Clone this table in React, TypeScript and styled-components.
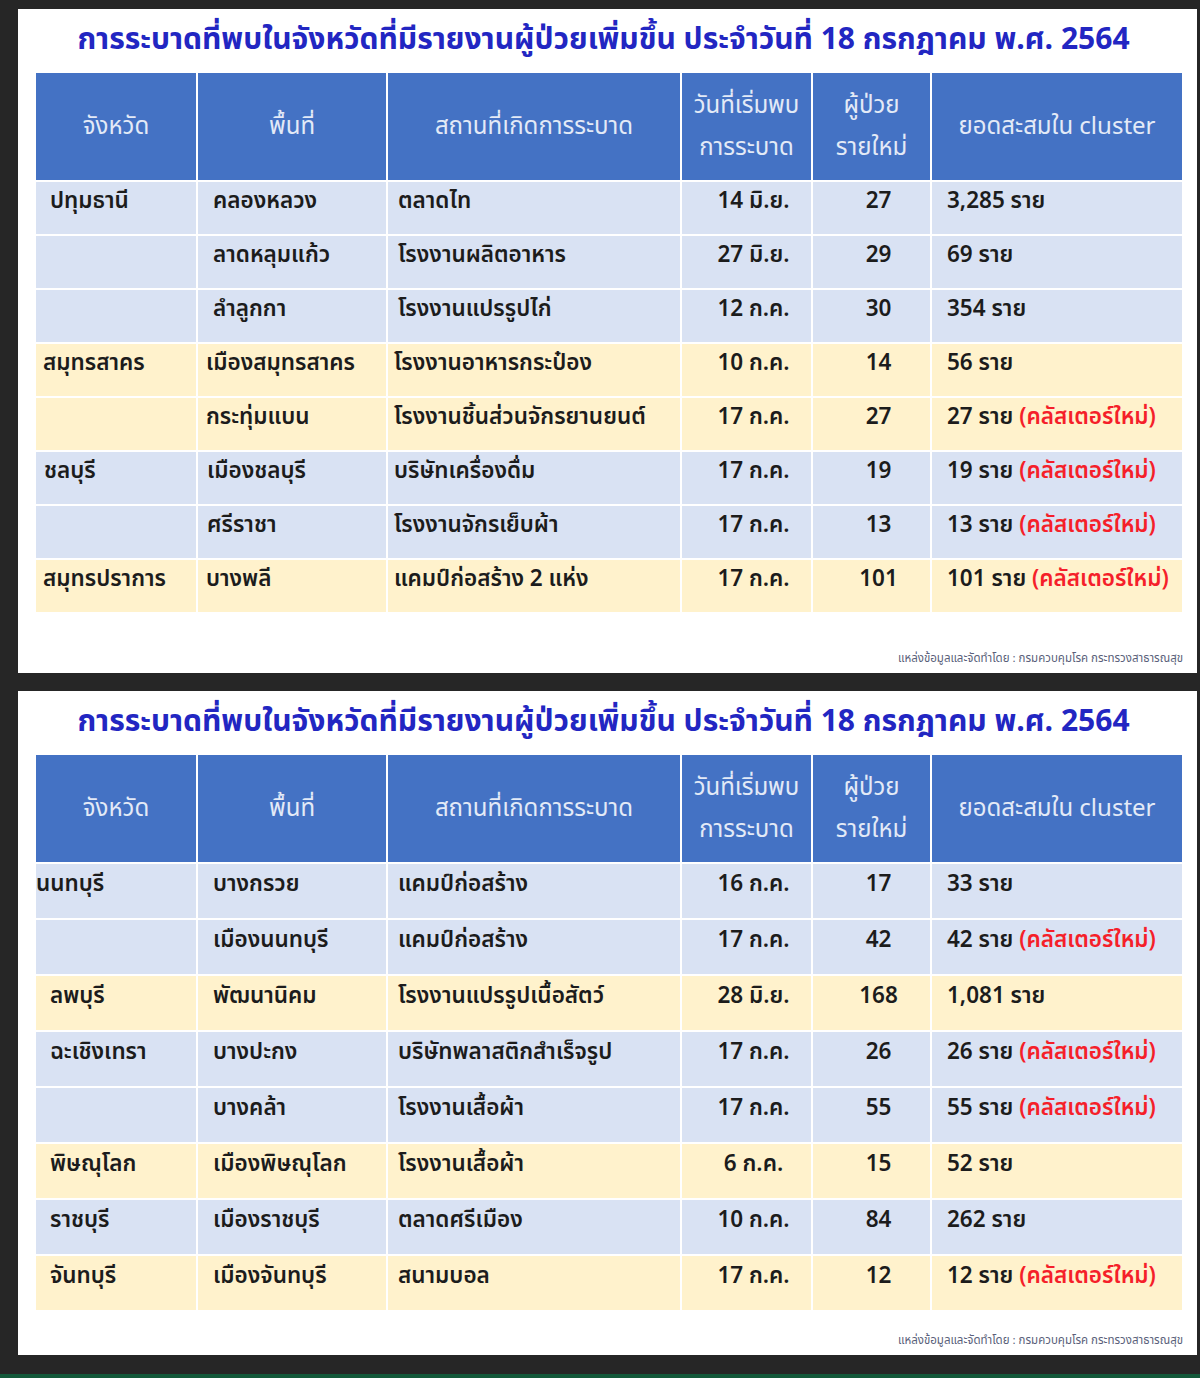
import React from 'react';
import styled, { createGlobalStyle } from 'styled-components';

const GlobalStyle = createGlobalStyle`
  html, body {
    margin: 0;
    padding: 0;
    background: #262626;
  }
`;

type Row = {
  province?: string;
  area: string;
  place: string;
  date: string;
  cases: string;
  total: string;
  isNew?: boolean;
  tone: 'blue' | 'yellow';
  lead?: number;
};

const firstRows: Row[] = [
  { province: 'ปทุมธานี', area: 'คลองหลวง', place: 'ตลาดไท', date: '14 มิ.ย.', cases: '27', total: '3,285 ราย', tone: 'blue' },
  { area: 'ลาดหลุมแก้ว', place: 'โรงงานผลิตอาหาร', date: '27 มิ.ย.', cases: '29', total: '69 ราย', tone: 'blue' },
  { area: 'ลำลูกกา', place: 'โรงงานแปรรูปไก่', date: '12 ก.ค.', cases: '30', total: '354 ราย', tone: 'blue' },
  { province: 'สมุทรสาคร', area: 'เมืองสมุทรสาคร', place: 'โรงงานอาหารกระป๋อง', date: '10 ก.ค.', cases: '14', total: '56 ราย', tone: 'yellow', lead: -7 },
  { area: 'กระทุ่มแบน', place: 'โรงงานชิ้นส่วนจักรยานยนต์', date: '17 ก.ค.', cases: '27', total: '27 ราย', isNew: true, tone: 'yellow', lead: -7 },
  { province: 'ชลบุรี', area: 'เมืองชลบุรี', place: 'บริษัทเครื่องดื่ม', date: '17 ก.ค.', cases: '19', total: '19 ราย', isNew: true, tone: 'blue', lead: -6 },
  { area: 'ศรีราชา', place: 'โรงงานจักรเย็บผ้า', date: '17 ก.ค.', cases: '13', total: '13 ราย', isNew: true, tone: 'blue', lead: -6 },
  { province: 'สมุทรปราการ', area: 'บางพลี', place: 'แคมป์ก่อสร้าง 2 แห่ง', date: '17 ก.ค.', cases: '101', total: '101 ราย', isNew: true, tone: 'yellow', lead: -7 },
];

const secondRows: Row[] = [
  { province: 'นนทบุรี', area: 'บางกรวย', place: 'แคมป์ก่อสร้าง', date: '16 ก.ค.', cases: '17', total: '33 ราย', tone: 'blue', lead: -14 },
  { area: 'เมืองนนทบุรี', place: 'แคมป์ก่อสร้าง', date: '17 ก.ค.', cases: '42', total: '42 ราย', isNew: true, tone: 'blue' },
  { province: 'ลพบุรี', area: 'พัฒนานิคม', place: 'โรงงานแปรรูปเนื้อสัตว์', date: '28 มิ.ย.', cases: '168', total: '1,081 ราย', tone: 'yellow' },
  { province: 'ฉะเชิงเทรา', area: 'บางปะกง', place: 'บริษัทพลาสติกสำเร็จรูป', date: '17 ก.ค.', cases: '26', total: '26 ราย', isNew: true, tone: 'blue' },
  { area: 'บางคล้า', place: 'โรงงานเสื้อผ้า', date: '17 ก.ค.', cases: '55', total: '55 ราย', isNew: true, tone: 'blue' },
  { province: 'พิษณุโลก', area: 'เมืองพิษณุโลก', place: 'โรงงานเสื้อผ้า', date: '6 ก.ค.', cases: '15', total: '52 ราย', tone: 'yellow' },
  { province: 'ราชบุรี', area: 'เมืองราชบุรี', place: 'ตลาดศรีเมือง', date: '10 ก.ค.', cases: '84', total: '262 ราย', tone: 'blue' },
  { province: 'จันทบุรี', area: 'เมืองจันทบุรี', place: 'สนามบอล', date: '17 ก.ค.', cases: '12', total: '12 ราย', isNew: true, tone: 'yellow' },
];

const TITLE = 'การระบาดที่พบในจังหวัดที่มีรายงานผู้ป่วยเพิ่มขึ้น ประจำวันที่ 18 กรกฎาคม พ.ศ. 2564';
const SOURCE = 'แหล่งข้อมูลและจัดทำโดย : กรมควบคุมโรค กระทรวงสาธารณสุข';

function Slide({ rows, rowHeight }: { rows: Row[]; rowHeight: number }) {
  return (
    <Panel>
      <Title>{TITLE}</Title>
      <Table>
        <colgroup>
          <col style={{ width: 162 }} />
          <col style={{ width: 190 }} />
          <col style={{ width: 294 }} />
          <col style={{ width: 131 }} />
          <col style={{ width: 119 }} />
          <col style={{ width: 252 }} />
        </colgroup>
        <thead>
          <tr>
            <Head>จังหวัด</Head>
            <Head>พื้นที่</Head>
            <Head>สถานที่เกิดการระบาด</Head>
            <Head>วันที่เริ่มพบ<br />การระบาด</Head>
            <Head>ผู้ป่วย<br />รายใหม่</Head>
            <Head>ยอดสะสมใน cluster</Head>
          </tr>
        </thead>
        <tbody>
          {rows.map((r, i) => (
            <BodyRow key={i} $tone={r.tone} $h={rowHeight}>
              <Cell $pad={14 + (r.lead ?? 0)}>{r.province}</Cell>
              <Cell $pad={15 + (r.lead && r.lead > -10 ? r.lead : 0)}>{r.area}</Cell>
              <Cell $pad={10 + (r.lead && r.lead > -10 ? -4 : 0)}>{r.place}</Cell>
              <NumCell>{r.date}</NumCell>
              <NumCell>{r.cases}</NumCell>
              <Cell $pad={15}>
                {r.total}
                {r.isNew && <NewTag> (คลัสเตอร์ใหม่)</NewTag>}
              </Cell>
            </BodyRow>
          ))}
        </tbody>
      </Table>
      <Source>{SOURCE}</Source>
    </Panel>
  );
}

export default function App() {
  return (
    <>
      <GlobalStyle />
      <Page>
        <Slide rows={firstRows} rowHeight={54} />
        <Slide rows={secondRows} rowHeight={56} />
        <BottomBar />
      </Page>
    </>
  );
}

const Page = styled.div`
  display: flex;
  flex-direction: column;
  gap: 18px;
  padding: 9px 3px 0 18px;
  height: 1378px;
  box-sizing: border-box;
  font-family: Tahoma, "Noto Sans Thai", "Noto Sans", "DejaVu Sans", sans-serif;
`;

const Panel = styled.div`
  display: flex;
  flex-direction: column;
  background: #ffffff;
  height: 664px;
  padding: 0 14px 0 16px;
  box-sizing: border-box;
`;

const Title = styled.h1`
  margin: 0;
  padding-right: 10px;
  height: 64px;
  line-height: 62px;
  text-align: center;
  font-size: 30px;
  font-weight: 700;
  color: #2226c2;
  white-space: nowrap;
`;

const Table = styled.table`
  width: 1148px;
  border-collapse: collapse;
  table-layout: fixed;
`;

const Head = styled.th`
  height: 107px;
  background: #4472c4;
  color: #e3eaf7;
  font-size: 24px;
  font-weight: 400;
  line-height: 42px;
  text-align: center;
  vertical-align: middle;
  border: 2px solid #ffffff;
  border-top: none;
  padding: 0;
  white-space: nowrap;
`;

const BodyRow = styled.tr<{ $tone: 'blue' | 'yellow'; $h: number }>`
  height: ${(p) => p.$h}px;
  background: ${(p) => (p.$tone === 'blue' ? '#d9e2f3' : '#fff2cc')};
`;

const Cell = styled.td<{ $pad: number }>`
  padding: 0 0 14px ${(p) => p.$pad}px;
  border: 2px solid #ffffff;
  font-size: 22.5px;
  font-weight: 600;
  color: #1c1c1c;
  white-space: nowrap;
  vertical-align: middle;
  overflow: visible;
`;

const NumCell = styled(Cell).attrs({ $pad: 14 })`
  text-align: center;
`;

const NewTag = styled.span`
  color: #f51f2a;
`;

const Source = styled.div`
  margin-top: auto;
  margin-bottom: 6px;
  text-align: right;
  font-size: 11.5px;
  color: #5a5f7a;
`;

const BottomBar = styled.div`
  margin: auto -3px 0 -18px;
  height: 4px;
  background: #13583a;
`;
